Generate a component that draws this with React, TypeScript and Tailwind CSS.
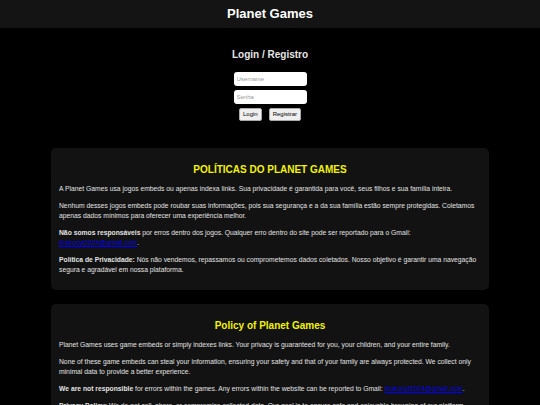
import React from 'react'

const EMAIL = 'drakocyt2024@gmail.com'

function Mail() {
  return (
    <a href="#" className="text-[#0000ee] underline">
      {EMAIL}
    </a>
  )
}

function PolicyCard({ title, children }: { title: string; children: React.ReactNode }) {
  return (
    <div className="w-[438px] mx-auto bg-[#121212] rounded-[5px] px-[8px] pt-[16px] pb-[15px]">
      <h2 className="text-center text-[10px] leading-[12px] font-bold text-[#f2f20a] mb-[8px]">{title}</h2>
      <div className="flex flex-col gap-[7px] text-[6.75px] leading-[10px] text-[#e2e2e2]">{children}</div>
    </div>
  )
}

export default function App() {
  return (
    <div className="min-h-screen bg-black text-[#ddd] font-['Liberation_Sans',Arial,sans-serif]">
      <header className="h-[28px] bg-[#141414] flex items-center justify-center">
        <h1 className="text-[13px] leading-[16px] font-bold text-white">Planet Games</h1>
      </header>

      {/* Login */}
      <section className="flex flex-col items-center pt-[21px]">
        <h2 className="text-[10px] leading-[12px] font-bold text-[#e6e6e6]">Login / Registro</h2>
        <div className="mt-[11px] flex flex-col gap-[4px] items-center">
          <input
            placeholder="Username"
            className="w-[73px] h-[14px] bg-white rounded-[3px] px-[3px] text-[6px] text-black placeholder:text-[#999] outline-none"
          />
          <input
            placeholder="Senha"
            type="text"
            className="w-[73px] h-[14px] bg-white rounded-[3px] px-[3px] text-[6px] text-black placeholder:text-[#999] outline-none"
          />
          <div className="flex gap-[7px]">
            <button className="h-[13px] px-[3px] bg-[#efefef] border border-[#aaa] rounded-[2px] text-[6px] text-black">
              Login
            </button>
            <button className="h-[13px] px-[3px] bg-[#efefef] border border-[#aaa] rounded-[2px] text-[6px] text-black">
              Registrar
            </button>
          </div>
        </div>
      </section>

      <div className="mt-[27px] flex flex-col gap-[14px] pb-[20px]">
        <PolicyCard title="POLÍTICAS DO PLANET GAMES">
          <p>A Planet Games usa jogos embeds ou apenas indexa links. Sua privacidade é garantida para você, seus filhos e sua família inteira.</p>
          <p>Nenhum desses jogos embeds pode roubar suas informações, pois sua segurança e a da sua família estão sempre protegidas. Coletamos apenas dados mínimos para oferecer uma experiência melhor.</p>
          <p>
            <b>Não somos responsáveis</b> por erros dentro dos jogos. Qualquer erro dentro do site pode ser reportado para o Gmail: <Mail />.
          </p>
          <p>
            <b>Política de Privacidade:</b> Nós não vendemos, repassamos ou comprometemos dados coletados. Nosso objetivo é garantir uma navegação segura e agradável em nossa plataforma.
          </p>
        </PolicyCard>

        <PolicyCard title="Policy of Planet Games">
          <p>Planet Games uses game embeds or simply indexes links. Your privacy is guaranteed for you, your children, and your entire family.</p>
          <p>None of these game embeds can steal your information, ensuring your safety and that of your family are always protected. We collect only minimal data to provide a better experience.</p>
          <p>
            <b>We are not responsible</b> for errors within the games. Any errors within the website can be reported to Gmail: <Mail />.
          </p>
          <p>
            <b>Privacy Policy:</b> We do not sell, share, or compromise collected data. Our goal is to ensure safe and enjoyable browsing of our platform.
          </p>
        </PolicyCard>
      </div>
    </div>
  )
}
